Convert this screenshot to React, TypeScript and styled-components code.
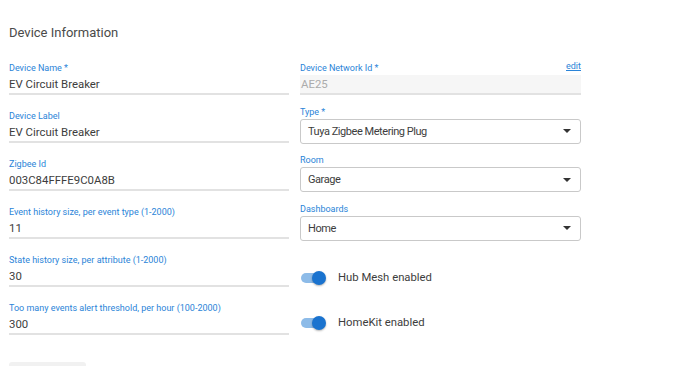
import React from "react"
import styled, { createGlobalStyle } from "styled-components"

const GlobalStyle = createGlobalStyle`
  html, body {
    margin: 0;
    padding: 0;
    background: #ffffff;
    font-family: Roboto, "Noto Sans", Arial, sans-serif;
  }
`

const colors = {
  label: "#2b84d8",
  text: "#3d3d3d",
  title: "#4a4a4a",
  line: "#e2e2e2",
  border: "#c9c9c9",
  disabledBg: "#f6f6f6",
  disabledText: "#ababab",
  thumb: "#1a73cf",
  track: "#8dbbe8",
}

const Page = styled.div`
  padding: 22px 9px 0;
  width: 572px;
`

const Title = styled.h2`
  margin: 0 0 18px;
  font-size: 13px;
  line-height: 22px;
  font-weight: 400;
  color: ${colors.title};
`

const Columns = styled.div`
  display: grid;
  grid-template-columns: 280px 281px;
  column-gap: 11px;
  align-items: start;
`

const Column = styled.div`
  display: flex;
  flex-direction: column;
`

const TextField = styled.div<{ last?: boolean }>`
  display: flex;
  flex-direction: column;
  margin-bottom: ${(p) => (p.last ? "0" : "15px")};
`

const LabelRow = styled.div`
  display: flex;
  justify-content: space-between;
  align-items: flex-end;
  height: 13px;
`

const Label = styled.label`
  font-size: 9px;
  line-height: 13px;
  color: ${colors.label};
  white-space: nowrap;
`

const EditLink = styled.a`
  font-size: 9px;
  line-height: 13px;
  color: ${colors.label};
  text-decoration: underline;
  position: relative;
  top: -2px;
`

const Value = styled.div<{ disabled?: boolean }>`
  font-size: 11.4px;
  line-height: 18px;
  height: 18px;
  color: ${(p) => (p.disabled ? colors.disabledText : colors.text)};
  background: ${(p) => (p.disabled ? colors.disabledBg : "transparent")};
  border-bottom: 2px solid ${colors.line};
  padding-left: ${(p) => (p.disabled ? "1px" : "0")};
`

const SelectField = styled.div`
  display: flex;
  flex-direction: column;
  margin-top: 10.5px;
`

const SelectBox = styled.div`
  display: flex;
  align-items: center;
  justify-content: space-between;
  height: 23px;
  padding: 0 9px 0 7px;
  border: 1px solid ${colors.border};
  border-radius: 3px;
  font-size: 11px;
  letter-spacing: -0.45px;
  color: ${colors.text};
`

const Caret = styled.span`
  width: 0;
  height: 0;
  border-left: 4px solid transparent;
  border-right: 4px solid transparent;
  border-top: 4px solid #333;
`

const ToggleRow = styled.div<{ first?: boolean }>`
  display: flex;
  align-items: center;
  height: 30px;
  margin-top: ${(p) => (p.first ? "22px" : "15px")};
`

const Toggle = styled.span`
  position: relative;
  width: 22px;
  height: 10px;
  margin-left: 1px;
  border-radius: 5px;
  background: ${colors.track};
  flex-shrink: 0;
`

const Thumb = styled.span`
  position: absolute;
  right: -3px;
  top: -2px;
  width: 14px;
  height: 14px;
  border-radius: 50%;
  background: ${colors.thumb};
  box-shadow: 0 1px 2px rgba(0, 0, 0, 0.3);
`

const ToggleText = styled.span`
  margin-left: 15px;
  font-size: 11.3px;
  color: ${colors.text};
`

const SaveButton = styled.button`
  display: block;
  margin-top: 24px;
  width: 77px;
  height: 30px;
  border: none;
  border-radius: 3px;
  background: #f1f1f1;
`

const leftFields = [
  { label: "Device Name *", value: "EV Circuit Breaker" },
  { label: "Device Label", value: "EV Circuit Breaker" },
  { label: "Zigbee Id", value: "003C84FFFE9C0A8B" },
  { label: "Event history size, per event type (1-2000)", value: "11" },
  { label: "State history size, per attribute (1-2000)", value: "30" },
  { label: "Too many events alert threshold, per hour (100-2000)", value: "300" },
]

const selects = [
  { label: "Type *", value: "Tuya Zigbee Metering Plug" },
  { label: "Room", value: "Garage" },
  { label: "Dashboards", value: "Home" },
]

const toggles = ["Hub Mesh enabled", "HomeKit enabled"]

export default function App() {
  return (
    <>
      <GlobalStyle />
      <Page>
        <Title>Device Information</Title>
        <Columns>
          <Column>
            {leftFields.map((f, i) => (
              <TextField key={f.label} last={i === leftFields.length - 1}>
                <LabelRow>
                  <Label>{f.label}</Label>
                </LabelRow>
                <Value>{f.value}</Value>
              </TextField>
            ))}
          </Column>
          <Column>
            <TextField last>
              <LabelRow>
                <Label>Device Network Id *</Label>
                <EditLink href="#">edit</EditLink>
              </LabelRow>
              <Value disabled>AE25</Value>
            </TextField>
            {selects.map((s) => (
              <SelectField key={s.label}>
                <LabelRow>
                  <Label>{s.label}</Label>
                </LabelRow>
                <SelectBox>
                  <span>{s.value}</span>
                  <Caret />
                </SelectBox>
              </SelectField>
            ))}
            {toggles.map((t, i) => (
              <ToggleRow key={t} first={i === 0}>
                <Toggle>
                  <Thumb />
                </Toggle>
                <ToggleText>{t}</ToggleText>
              </ToggleRow>
            ))}
          </Column>
        </Columns>
        <SaveButton />
      </Page>
    </>
  )
}
